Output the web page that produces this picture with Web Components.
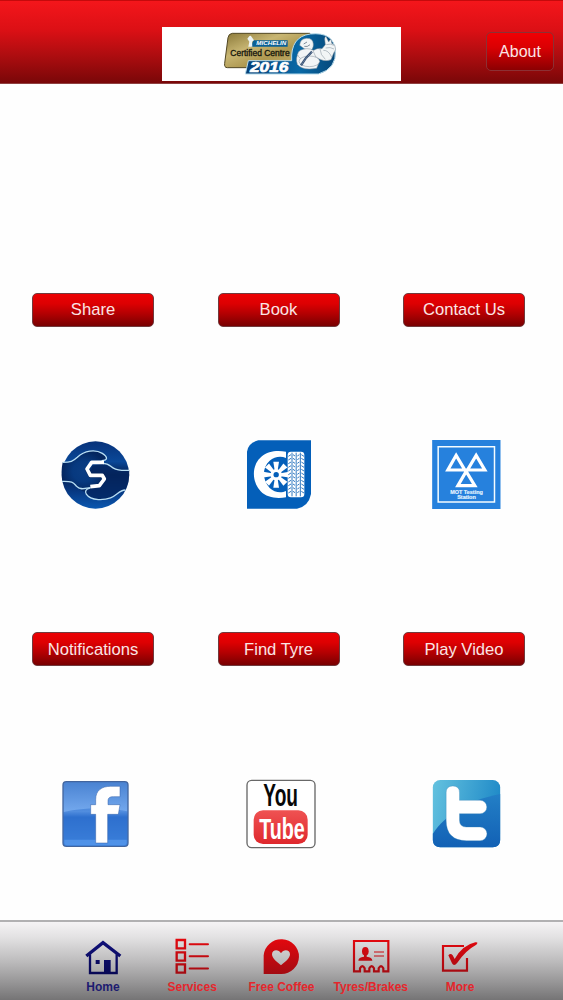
<!DOCTYPE html>
<html lang="en">
<head>
<meta charset="utf-8">
<title>Home</title>
<style>
  body {
    margin: 0;
    height: 1000px;
    display: flex;
    flex-direction: column;
    background: #fefefe;
    font-family: "Liberation Sans", Arial, sans-serif;
    overflow: hidden;
  }
</style>
</head>
<body>
<app-header><app-button compact>About</app-button></app-header>
<app-grid>
  <app-tile icon="hands" label="Share"></app-tile>
  <app-tile icon="wheel" label="Book"></app-tile>
  <app-tile icon="mot" label="Contact Us"></app-tile>
  <app-tile icon="facebook" label="Notifications"></app-tile>
  <app-tile icon="youtube" label="Find Tyre"></app-tile>
  <app-tile icon="twitter" label="Play Video"></app-tile>
</app-grid>
<app-tabs>
  <app-tab icon="home" active>Home</app-tab>
  <app-tab icon="list">Services</app-tab>
  <app-tab icon="heart">Free Coffee</app-tab>
  <app-tab icon="voucher">Tyres/Brakes</app-tab>
  <app-tab icon="check">More</app-tab>
</app-tabs>

<script>
const TREAD = [0, 1, 2, 3, 4, 5, 6, 7, 8, 9, 10].map(i => {
  const y = 74 + i * 11
  return `M160 ${y + 5}l8-5M199 ${y}l8 5M174 ${y}l6 4M187 ${y + 4}l6-4`
}).join('')

const SPOKES = [0, 45, 90, 135, 180, 225, 270, 315].map(a =>
  `<path d="M119 121L115 95H132L128 121Z" transform="rotate(${a} 123.500 134)"/>`
).join('')

const TILE_ICONS = {
  hands: `<svg viewBox="36 33 204 204">
    <defs>
      <radialGradient id="a" cx=".5" cy=".5" r=".5"><stop offset="0" stop-color="#0a3d83"/><stop offset=".5" stop-color="#07397f"/><stop offset="1" stop-color="#04265f"/></radialGradient>
      <linearGradient id="b" x2="0" y2="1"><stop stop-color="#07327a"/><stop offset=".3" stop-color="#0a4898"/><stop offset=".5" stop-color="#041e50"/><stop offset=".75" stop-color="#073984"/><stop offset="1" stop-color="#0b58b0"/></linearGradient>
    </defs>
    <circle cx="136.500" cy="135" r="101" fill="url(#b)"/>
    <path d="M38 97C62 97 69 94 82 82C103 61 136 57 157 70C174 81 170 91 155 91L116 93L104 120L118 143H155L158 151L145 170H119Q103 174 107 186Q86 180 79 168Q70 153 37 154Q32 126 38 97Z" fill="url(#a)"/>
    <path d="M166 98C188 105 177 120 215 121H238Q239 154 225 181C202 179 202 205 163 209C127 212 103 196 106 185Q107 172 119 171L146 170L168 153L164 130L122 130L127 107L160 101Z" fill="#04265f" opacity=".8"/>
    <g fill="none" stroke="#b9dff4" stroke-width="4">
      <path d="M38 97C62 97 69 94 82 82C103 61 136 57 157 70C174 81 174 91 155 92"/>
      <path d="M157 100C188 99 176 120 215 121H238"/>
      <path d="M36 154C70 153 70 158 80 169C91 182 107 174 122 173"/>
      <path d="M120 174C94 180 108 205 145 209C200 211 199 181 226 180"/>
    </g>
    <path d="M162 97H125L111 117L121 136H157L163 147L148 167L121 170" fill="none" stroke="#fff" stroke-width="11" stroke-linejoin="round"/>
  </svg>`,
  wheel: `<svg viewBox="36 33 204 204">
    <path d="M70 31H228V192Q221 229 186 236H36V65Q40 38 70 31Z" fill="#045fb9"/>
    <path d="M153 65V84C137 77 118 80 104 92C81 112 81 150 104 174C117 187 138 191 153 183V202C125 207 95 203 77 184C51 157 48 106 79 80C100 62 128 60 153 65Z" fill="#fff"/>
    <g fill="#fff">${SPOKES}<circle cx="123.500" cy="134" r="17"/></g>
    <circle cx="123.500" cy="134" r="8" fill="#045fb9"/>
    <rect x="158" y="65" width="50" height="137" rx="10" fill="#fff"/>
    <path d="${TREAD}M171 68V199M183.500 68V199M196 68V199" fill="none" stroke="#2f78c0" stroke-width="3"/>
  </svg>`,
  mot: `<svg viewBox="38.500 33 204 204">
    <path fill="#2681dd" d="M36 30H241V237H36Z"/>
    <path fill="none" stroke="#f4fcff" stroke-width="4.500" d="M54 50H223V216H54Z"/>
    <path fill="none" stroke="#fff" stroke-width="9.500" d="M108 76L83 120H134ZM168 76L142 120H194ZM138 124L113 167H164Z"/>
    <g fill="#e7f6ff" stroke="#e7f6ff" stroke-width=".5" font-family="Liberation Sans" font-weight="bold" font-size="17" text-anchor="middle">
      <text x="139" y="191" textLength="98" lengthAdjust="spacingAndGlyphs">MOT Testing</text>
      <text x="139" y="207" textLength="56" lengthAdjust="spacingAndGlyphs">Station</text>
    </g>
  </svg>`,
  facebook: `<svg viewBox="36 30 204 204">
    <defs><linearGradient id="a" x2="0" y2="1"><stop stop-color="#4a83d2"/><stop offset=".46" stop-color="#73a8ed"/><stop offset=".55" stop-color="#3978d2"/><stop offset="1" stop-color="#4f91e6"/></linearGradient></defs>
    <rect x="37" y="33" width="199" height="198" rx="12" fill="#42659e"/>
    <rect x="41" y="37" width="191" height="190" rx="8" fill="url(#a)"/>
    <path d="M41 126Q140 105 232 124V218Q232 227 224 227H49Q41 227 41 218Z" fill="#1f64c9" opacity=".4"/>
    <path d="M43 209H230V217Q230 226 222 226H51Q43 226 43 217Z" fill="#70b1ff" opacity=".4"/>
    <path d="M137 219V133H122V104H137V89C137 61 155 49 182 49H210V80H190C177 80 174 85 174 94V104H210L205 133H173V219Z" fill="#fff" stroke="#315fa8" stroke-width="1.500"/>
  </svg>`,
  youtube: `<svg viewBox="36 30 204 204">
    <defs><linearGradient id="a" x2="0" y2="1"><stop stop-color="#ef5252"/><stop offset="1" stop-color="#df282d"/></linearGradient></defs>
    <rect x="36" y="31" width="204" height="202" rx="14" fill="#fff" stroke="#686868" stroke-width="4"/>
    <rect x="56" y="121" width="162" height="101" rx="28" fill="url(#a)"/>
    <g font-family="Liberation Sans Narrow, Liberation Sans" font-weight="bold" text-anchor="middle">
      <text x="137" y="107" font-size="93" textLength="104" lengthAdjust="spacingAndGlyphs" fill="#080808">You</text>
      <text x="141" y="206" font-size="87" textLength="137" lengthAdjust="spacingAndGlyphs" fill="#fff">Tube</text>
    </g>
  </svg>`,
  twitter: `<svg viewBox="38.500 30 204 204">
    <defs>
      <linearGradient id="a" x2="1" y2=".2"><stop stop-color="#64c2df"/><stop offset="1" stop-color="#218bc8"/></linearGradient>
      <linearGradient id="b" x2="0" y2="1"><stop stop-color="#237fc6"/><stop offset="1" stop-color="#1261b5"/></linearGradient>
    </defs>
    <rect x="38" y="30" width="202" height="202" rx="22" fill="url(#a)"/>
    <path d="M38 191C75 135 145 90 240 72V210Q240 232 218 232H60Q38 232 38 210Z" fill="url(#b)"/>
    <path d="M98 48Q118 48 118 68V91H180A20 20 0 0 1 180 131H118V151Q118 171 138 171H180A20 20 0 0 1 180 212H139Q78 212 78 151V68Q78 48 98 48Z" fill="#fff" stroke="#3a83b2" stroke-width="1"/>
  </svg>`,
}

// every tab icon is painted with the same top to bottom gradient
const TAB_ICONS = {
  home: {
    x: 255,
    art: `<path d="M259 138L309 98L361 138" stroke-width="10"/><path d="M270 133V189H350V133" stroke-width="7"/><path d="M312 150H332V189H312ZM287 150H299V162H287Z" class="fill"/>`,
  },
  list: {
    x: 523,
    art: `<path d="M531 90H556V115H531ZM531 127H556V152H531ZM531 163H556V188H531Z" stroke-width="7"/><path d="M570 102.500H625M570 139H625M570 175.500H625" stroke-width="6" stroke-linecap="round"/>`,
  },
  heart: {
    x: -20,
    art: `<path fill-rule="evenodd" class="fill" d="M-18 192V136A53 52 0 1 1 35 192ZM34 166C23 156 7 146 7 133C7 118 27 116 34 130C41 116 61 118 61 133C61 146 45 156 34 166Z"/>`,
  },
  voucher: {
    x: 248,
    art: `<path d="M251 93H354V184H339V175Q332 162 325 175V184H311V175Q304 162 297 175V184H283V175Q276 162 269 175V184H251Z" stroke-width="6.500"/><ellipse cx="285" cy="124" rx="10" ry="13" class="fill"/><path d="M281 132H289V140Q306 142 306 152H264Q264 142 281 140Z" class="fill"/><path d="M311 126H341M311 138H341" stroke-width="3"/>`,
  },
  check: {
    x: 516,
    art: `<path d="M582 108H519V182H591V144" stroke-width="6.500"/><path class="fill" d="M535 136Q542 128 548 136L554 147Q578 105 616 97Q627 96 619 104Q587 121 562 158Q552 171 546 160Z"/>`,
  },
}

class AppHeader extends HTMLElement {
  constructor() {
    super()
    this.attachShadow({ mode: 'open' }).innerHTML = `<style>
      :host {
        display: grid;
        grid-template-columns: 162px 239px 1fr;
        height: 84px;
        box-sizing: border-box;
        padding-top: 27px;
        border-top: 1px solid #c50a0c;
        border-bottom: 1px solid #8f4040;
        background: linear-gradient(#f4161b, #dc1015 35%, #ae0d10 66%, #790708);
        flex: none;
      }
      .logo {
        grid-column: 2;
        height: 54px;
        margin-top: -1px;
        background: #fff;
      }
      svg {
        display: block;
        width: 135px;
        height: 54px;
        margin: 0 auto;
      }
      .action {
        justify-self: end;
        margin: 4px 9px 0 0;
      }
    </style>
    <div class="logo"><svg viewBox="-3 6 405 162">
      <defs>
        <linearGradient id="g" x2="1" y2="1"><stop stop-color="#8a7838"/><stop offset=".35" stop-color="#c8b673"/><stop offset=".6" stop-color="#ae9850"/><stop offset="1" stop-color="#c9b878"/></linearGradient>
        <linearGradient id="b" x2="1" y2="0"><stop stop-color="#073f75"/><stop offset=".6" stop-color="#0869a6"/><stop offset="1" stop-color="#064779"/></linearGradient>
      </defs>
      <path d="M52 25H285L240 128H37Q27 128 29 115L39 38Q41 26 52 25Z" fill="url(#g)" stroke="#514724" stroke-width="3"/>
      <path d="M100 107H230Q226 35 286 27Q355 20 361 75Q366 131 310 147H91Z" fill="url(#b)" stroke="#b7dbeb" stroke-width="3"/>
      <path d="M115 46H218V65H108Z" fill="#0a6197"/>
      <path d="M101 36Q106 28 110 36L117 46L111 50L112 65H100L103 50L97 41Z" fill="#edf4f4"/>
      <text x="124" y="61" font-size="16" font-weight="bold" font-style="italic" textLength="90" lengthAdjust="spacingAndGlyphs" fill="#fff">MICHELIN</text>
      <text x="46" y="94" font-size="25" textLength="178" lengthAdjust="spacingAndGlyphs" fill="#17180d" stroke="#17180d" stroke-width="1">Certified Centre</text>
      <text x="105" y="142" font-size="43" font-weight="bold" font-style="italic" textLength="115" lengthAdjust="spacingAndGlyphs" fill="#fff" stroke="#fff" stroke-width="2">2016</text>
      <g fill="#f2f5f6" stroke="#7d8b96" stroke-width="1.500">
        <path d="M252 81Q240 99 247 118Q261 138 305 130L312 113L304 84Z"/>
        <path d="M269 72L254 61Q255 42 274 40Q294 39 295 57Q296 73 284 77Z"/>
        <ellipse cx="276" cy="88" rx="28" ry="17"/><ellipse cx="283" cy="109" rx="31" ry="16"/>
        <path d="M294 77Q307 68 321 71L331 59L329 42Q331 26 337 43L341 51Q349 35 350 55L359 60Q366 74 356 84L348 104Q326 113 302 95Z"/>
        <path d="M334 59Q346 55 357 61M332 69Q346 65 357 72M325 76Q340 75 350 96M315 72Q316 90 331 103" fill="none"/>
      </g>
      <path d="M266 57L276 51M268 64Q277 67 285 59" fill="none" stroke="#46586a" stroke-width="2"/>
      <path d="M291 80Q270 99 258 121" fill="none" stroke="#395477" stroke-width="7"/>
      <path d="M290 82Q271 100 259 120" fill="none" stroke="#b6c1d0" stroke-width="2" stroke-dasharray="3 3"/>
    </svg></div>
    <div class="action"><slot></slot></div>`
  }
}

class AppButton extends HTMLElement {
  constructor() {
    super()
    this.attachShadow({ mode: 'open' }).innerHTML = `<style>
      :host {
        display: block;
        width: 122px;
        height: 34px;
      }
      :host([compact]) {
        width: 68px;
        height: 39px;
      }
      button {
        display: block;
        width: 100%;
        height: 100%;
        padding: 1px 0 0;
        border: 1.500px solid #713a3d;
        border-radius: 5px;
        background: linear-gradient(#ec0003, #dd0002 30%, #b20002 62%, #780001);
        color: #fbe5e5;
        font: 16.600px "Liberation Sans", Arial, sans-serif;
        white-space: nowrap;
      }
      :host([compact]) button {
        border-color: #8c3034;
        background: linear-gradient(#f10003, #d90003 40%, #8b0002);
        font-size: 16px;
      }
    </style>
    <button><slot></slot></button>`
  }
}

class AppGrid extends HTMLElement {
  constructor() {
    super()
    this.attachShadow({ mode: 'open' }).innerHTML = `<style>
      :host {
        flex: 1;
        display: grid;
        grid-template-columns: repeat(3, 122px);
        grid-auto-rows: 216px;
        align-content: start;
        justify-content: space-between;
        row-gap: 123.500px;
        padding: 208.500px 38px 0 32px;
      }
    </style>
    <slot></slot>`
  }
}

class AppTile extends HTMLElement {
  connectedCallback() {
    this.attachShadow({ mode: 'open' }).innerHTML = `<style>
      :host {
        display: flex;
        flex-direction: column;
        justify-content: space-between;
      }
      svg {
        display: block;
        width: 68px;
        height: 68px;
        margin-left: 29.500px;
        overflow: visible;
      }
    </style>
    <app-button>${this.getAttribute('label')}</app-button>
    ${TILE_ICONS[this.getAttribute('icon')]}`
  }
}

class AppTabs extends HTMLElement {
  constructor() {
    super()
    this.attachShadow({ mode: 'open' }).innerHTML = `<style>
      :host {
        display: flex;
        justify-content: center;
        height: 80px;
        box-sizing: border-box;
        padding-top: 14px;
        border-top: 2px solid #b1b0b2;
        background: linear-gradient(#f5f3f5, #e2e1e2 20%, #bdbcbd 50%, #979697 77%, #757475);
        flex: none;
      }
    </style>
    <slot></slot>`
  }
}

class AppTab extends HTMLElement {
  connectedCallback() {
    const { x, art } = TAB_ICONS[this.getAttribute('icon')]
    this.attachShadow({ mode: 'open' }).innerHTML = `<style>
      :host {
        --top: #e4080e;
        --bottom: #a30b12;
        display: flex;
        flex-direction: column;
        align-items: center;
        gap: 4px;
        width: 89.300px;
        color: #e5262c;
        font-size: 12px;
        font-weight: bold;
        line-height: 14px;
        white-space: nowrap;
      }
      :host([active]) {
        --top: #11117b;
        --bottom: #080855;
        color: #1d1b70;
      }
      svg {
        width: 36px;
        height: 40px;
        fill: none;
        stroke: url(#paint);
        overflow: visible;
      }
      .fill {
        fill: url(#paint);
        stroke: none;
      }
    </style>
    <svg viewBox="${x} 78 108 120">
      <defs><linearGradient id="paint" gradientUnits="userSpaceOnUse" x1="0" y1="85" x2="0" y2="192">
        <stop style="stop-color: var(--top)"/><stop offset="1" style="stop-color: var(--bottom)"/>
      </linearGradient></defs>
      ${art}
    </svg>
    <span><slot></slot></span>`
  }
}

customElements.define('app-header', AppHeader)
customElements.define('app-button', AppButton)
customElements.define('app-grid', AppGrid)
customElements.define('app-tile', AppTile)
customElements.define('app-tabs', AppTabs)
customElements.define('app-tab', AppTab)
</script>
</body>
</html>
